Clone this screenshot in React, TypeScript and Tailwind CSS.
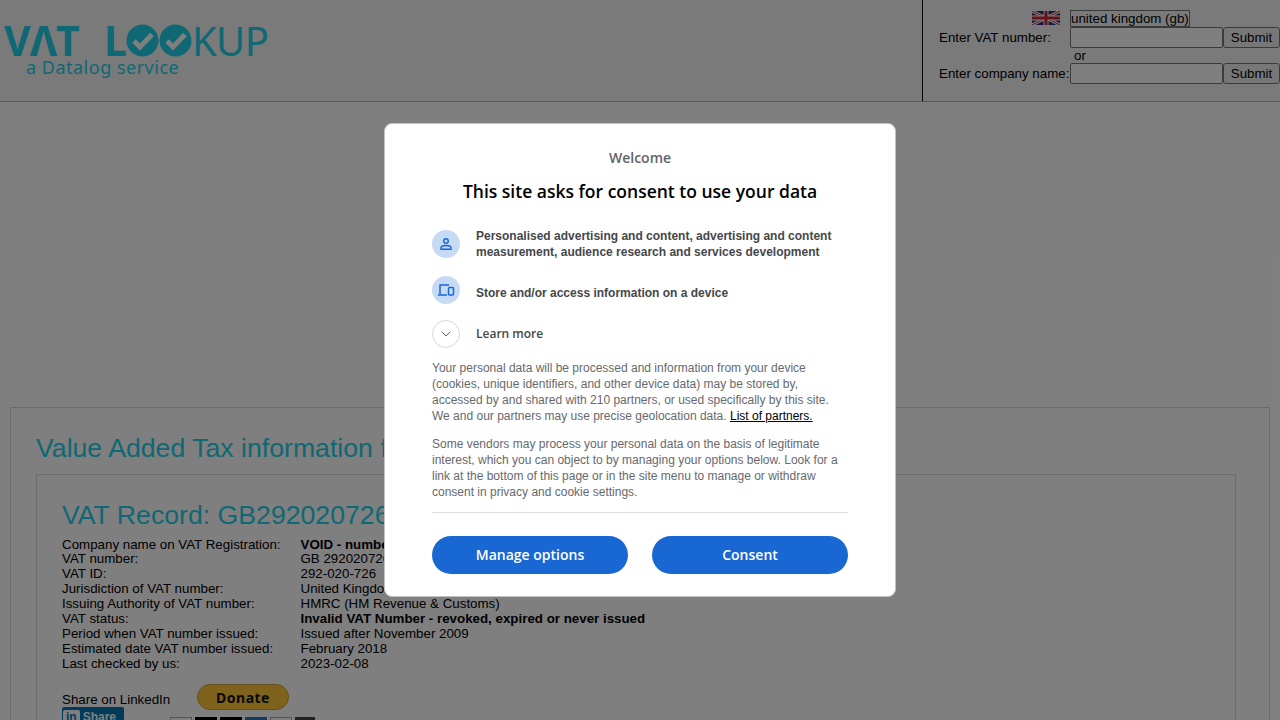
import { ChevronDown } from "lucide-react";

const rows: [string, string, boolean?][] = [
  ["Company name on VAT Registration:", "VOID - number not in use", true],
  ["VAT number:", "GB 292020726"],
  ["VAT ID:", "292-020-726"],
  ["Jurisdiction of VAT number:", "United Kingdom"],
  ["Issuing Authority of VAT number:", "HMRC (HM Revenue & Customs)"],
  ["VAT status:", "Invalid VAT Number - revoked, expired or never issued", true],
  ["Period when VAT number issued:", "Issued after November 2009"],
  ["Estimated date VAT number issued:", "February 2018"],
  ["Last checked by us:", "2023-02-08"],
];

function CheckCircle() {
  return (
    <svg viewBox="0 0 33 33" className="h-[33px] w-[33px] shrink-0">
      <circle cx="16.5" cy="16.5" r="16" fill="#20d0e8" />
      <path d="M8 17l6 6 12-12.5" fill="none" stroke="#fff" strokeWidth="5" />
    </svg>
  );
}

function Logo() {
  return (
    <div className="h-[101px] w-[300px] font-['Noto_Sans',sans-serif] text-[#20d0e8]">
      <div className="flex items-center pl-[4px] pt-[24px] leading-[33px]">
        <span className="w-[100px] text-[41px] font-bold tracking-[-1px]">VΛT</span>
        <span className="text-[41px] font-bold">L</span>
        <div className="ml-[-1px] flex">
          <CheckCircle />
          <CheckCircle />
        </div>
        <span className="text-[40px] tracking-[-0.6px]">KUP</span>
      </div>
      <div className="pl-[26px] text-[18px] leading-[20px] tracking-[0.5px]">a Datalog service</div>
    </div>
  );
}

function Flag() {
  return (
    <svg viewBox="0 0 28 14" className="h-[14px] w-[28px]">
      <rect width="28" height="14" fill="#22337f" />
      <path d="M0 0l28 14M28 0L0 14" stroke="#fff" strokeWidth="3" />
      <path d="M0 0l28 14M28 0L0 14" stroke="#d2232a" strokeWidth="1" />
      <path d="M14 0v14M0 7h28" stroke="#fff" strokeWidth="5" />
      <path d="M14 0v14M0 7h28" stroke="#d2232a" strokeWidth="3" />
    </svg>
  );
}

function SubmitButton() {
  return (
    <button className="h-[21px] w-[57px] rounded-[3px] border border-[#767676] bg-[#efefef] text-[13.33px] leading-none text-black">
      Submit
    </button>
  );
}

function SearchPanel() {
  return (
    <div className="ml-auto h-full w-[358px] border-l border-black pl-[16px] pt-[10px] text-[13.33px] leading-[16px] text-black">
      <div className="flex h-[17px]">
        <div className="flex w-[131px] justify-end pr-[10px] pt-[1px]">
          <Flag />
        </div>
        <div className="h-[17px] w-[120px] border border-[#767676] leading-[15px] whitespace-nowrap">united kingdom (gb)</div>
      </div>
      <div className="flex h-[21px] items-center">
        <div className="w-[131px]">Enter VAT number:</div>
        <div className="h-[21px] w-[153px] rounded-[2px] border border-[#767676] bg-white" />
        <SubmitButton />
      </div>
      <div className="h-[15px] pl-[135px] leading-[15px]">or</div>
      <div className="flex h-[21px] items-center">
        <div className="w-[131px] whitespace-nowrap">Enter company name:</div>
        <div className="h-[21px] w-[153px] rounded-[2px] border border-[#767676] bg-white" />
        <SubmitButton />
      </div>
    </div>
  );
}

function CardIcons() {
  return (
    <div className="mt-[7px] flex w-[146px] gap-[3px]">
      <div className="h-[20px] w-[22px] border border-[#aaa] bg-white" />
      <div className="h-[20px] w-[22px] bg-black" />
      <div className="h-[20px] w-[22px] bg-black" />
      <div className="h-[20px] w-[22px] bg-[#2e77bc]" />
      <div className="h-[20px] w-[22px] border border-[#aaa] bg-white" />
      <div className="h-[20px] w-[20px] bg-[#444]" />
    </div>
  );
}

function RecordCard() {
  return (
    <div className="mx-[10px] mt-[305px] border border-[#d8d8d8] bg-white pl-[25px] pr-[33px] font-['Liberation_Sans',sans-serif] text-black">
      <h1 className="pt-[24px] text-[26.67px] leading-[32px] text-[#20d0e8] whitespace-nowrap">Value Added Tax information for GB292020726</h1>
      <div className="mt-[10px] h-[400px] border border-[#d8d8d8] pl-[25px] pt-[24px]">
        <h2 className="text-[26.67px] leading-[32px] text-[#20d0e8]">VAT Record: GB292020726</h2>
        <div className="mt-[6.5px] text-[13.33px] leading-[14.9px]">
          {rows.map(([label, value, bold]) => (
            <div className="flex" key={label}>
              <div className="w-[238.5px] whitespace-nowrap">{label}</div>
              <div className={bold ? "font-bold" : ""}>{value}</div>
            </div>
          ))}
        </div>
        <div className="mt-[12.5px] flex">
          <div className="w-[108px] text-[13.33px] leading-[15px]">
            <div className="pt-[8px] whitespace-nowrap">Share on LinkedIn</div>
            <div className="flex h-[20px] w-[62px] items-center gap-[3px] rounded-[2px] bg-[#0077b5] px-[1px] text-[12px] font-bold text-white">
              <span className="rounded-[2px] bg-white px-[3px] leading-[15px] text-[#0077b5]">in</span>
              <span>Share</span>
            </div>
          </div>
          <div className="flex flex-col items-center">
            <div className="flex h-[26px] w-[92px] items-center justify-center rounded-full border border-[#c9a13b] bg-[#ffc439] font-['Noto_Sans',sans-serif] text-[14px] font-bold tracking-[0.5px] text-[#111]">
              Donate
            </div>
            <CardIcons />
          </div>
        </div>
      </div>
    </div>
  );
}

function ConsentModal() {
  return (
    <div className="absolute inset-0 bg-black/50">
      <div className="mx-auto mt-[123px] h-[474px] w-[512px] rounded-[8px] border border-[#c4c4c4] bg-white px-[47px] pt-[25px]">
        <div className="text-center font-['Open_Sans',sans-serif] text-[14px] font-semibold leading-[18px] text-[#5f6368]">Welcome</div>
        <div className="mt-[12px] text-center font-['Open_Sans',sans-serif] text-[17.5px] font-semibold leading-[24px] text-black">
          This site asks for consent to use your data
        </div>

        <div className="mt-[25px] flex items-center gap-[16px]">
          <div className="flex h-[28px] w-[28px] shrink-0 items-center justify-center rounded-full bg-[#c7daf5]">
            <svg viewBox="0 0 16 16" className="h-[16px] w-[16px]" fill="none" stroke="#1967d2" strokeWidth="1.4">
              <circle cx="8" cy="5" r="2.3" />
              <path d="M3 13.2v-1.4c0-1.4 2.4-2.3 5-2.3s5 .9 5 2.3v1.4z" />
            </svg>
          </div>
          <div className="font-['Liberation_Sans',sans-serif] text-[12px] font-bold leading-[16px] text-[#45474a]">
            Personalised advertising and content, advertising and content measurement, audience research and services development
          </div>
        </div>

        <div className="mt-[16px] flex items-center gap-[16px]">
          <div className="flex h-[28px] w-[28px] shrink-0 items-center justify-center rounded-full bg-[#c7daf5]">
            <svg viewBox="0 0 18 16" className="h-[16px] w-[18px]" fill="none" stroke="#1967d2" strokeWidth="1.5">
              <path d="M3 12V3h9M1 13h9" />
              <rect x="11.5" y="5.5" width="5" height="7.5" rx="1" />
            </svg>
          </div>
          <div className="pt-[6px] font-['Liberation_Sans',sans-serif] text-[12px] font-bold leading-[16px] text-[#45474a]">
            Store and/or access information on a device
          </div>
        </div>

        <div className="mt-[16px] flex items-center gap-[16px]">
          <div className="flex h-[28px] w-[28px] shrink-0 items-center justify-center rounded-full border border-[#d8d8d8] bg-white">
            <ChevronDown size={16} strokeWidth={1.5} color="#5f6368" />
          </div>
          <div className="font-['Open_Sans',sans-serif] text-[12px] font-semibold leading-[16px] text-[#45474a]">Learn more</div>
        </div>

        <div className="mt-[12px] font-['Liberation_Sans',sans-serif] text-[12px] leading-[16px] text-[#66696d]">
          <p>
            Your personal data will be processed and information from your device (cookies, unique identifiers, and other device data) may be stored by, accessed by and shared with 210 partners, or used specifically by this site. We and our partners may use precise geolocation data.{" "}
            <span className="text-black underline">List of partners.</span>
          </p>
          <p className="mt-[12px]">
            Some vendors may process your personal data on the basis of legitimate interest, which you can object to by managing your options below. Look for a link at the bottom of this page or in the site menu to manage or withdraw consent in privacy and cookie settings.
          </p>
        </div>

        <div className="mt-[12px] border-t border-[#dadce0]" />

        <div className="mt-[23px] flex gap-[24px] font-['Open_Sans',sans-serif] text-[14px] font-semibold text-white">
          <button className="h-[38px] w-[196px] rounded-full bg-[#1967d2] pb-[2px]">Manage options</button>
          <button className="h-[38px] w-[196px] rounded-full bg-[#1967d2] pb-[2px]">Consent</button>
        </div>
      </div>
    </div>
  );
}

export default function App() {
  return (
    <div className="relative h-[720px] overflow-hidden bg-white font-['Liberation_Sans',sans-serif]">
      <header className="flex h-[102px] border-b border-[#b0b0b0] bg-[#f4f4f4]">
        <Logo />
        <SearchPanel />
      </header>
      <RecordCard />
      <ConsentModal />
    </div>
  );
}
